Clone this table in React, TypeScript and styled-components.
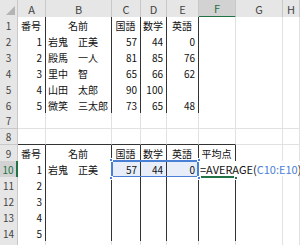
import React from "react"
import styled, { createGlobalStyle, css } from "styled-components"

const GlobalStyle = createGlobalStyle`
  *, *::before, *::after { box-sizing: border-box; }
  html, body { margin: 0; padding: 0; background: #fff; }
  body {
    width: 300px;
    height: 245px;
    overflow: hidden;
    font-family: "Noto Sans CJK JP", "Noto Sans", sans-serif;
  }
`

const COLS = "18px 28px 66px 29px 26px 32px 37px 47px 1fr"
const LETTERS = ["A", "B", "C", "D", "E", "F", "G", "H"]
const GREEN = "#217346"
const BLUE = "#4a7fd6"

const Sheet = styled.div`
  width: 300px;
  height: 245px;
  overflow: hidden;
  background: #fff;
`

const Row = styled.div<{ $head?: boolean }>`
  display: grid;
  grid-template-columns: ${COLS};
  height: ${(p) => (p.$head ? 17 : 16)}px;
`

const Corner = styled.div`
  background: #e6e6e6;
  border-right: 1px solid #c8c8c8;
  border-bottom: 1px solid #c8c8c8;
  display: flex;
  align-items: flex-end;
  justify-content: flex-end;
  padding: 0 2px 2px 0;
`

const ColHead = styled.div<{ $active?: boolean }>`
  display: flex;
  align-items: center;
  justify-content: center;
  font-size: 11px;
  background: ${(p) => (p.$active ? "#d2d2d2" : "#e6e6e6")};
  color: ${(p) => (p.$active ? GREEN : "#444")};
  border-right: 1px solid #c8c8c8;
  border-bottom: ${(p) => (p.$active ? `2px solid ${GREEN}` : "1px solid #c8c8c8")};
`

const RowHead = styled.div<{ $active?: boolean }>`
  display: flex;
  align-items: center;
  justify-content: center;
  font-size: 10px;
  background: ${(p) => (p.$active ? "#d2d2d2" : "#e6e6e6")};
  color: ${(p) => (p.$active ? GREEN : "#444")};
  border-right: ${(p) => (p.$active ? `2px solid ${GREEN}` : "1px solid #c8c8c8")};
  border-bottom: 1px solid #c8c8c8;
`

type Align = "l" | "c" | "r"

const Cell = styled.div<{
  $align: Align
  $rDark: boolean
  $bDark: boolean
  $sel?: "first" | "mid" | "last"
  $edit?: boolean
}>`
  position: relative;
  display: flex;
  align-items: center;
  justify-content: ${(p) =>
    p.$align === "r" ? "flex-end" : p.$align === "c" ? "center" : "flex-start"};
  padding: 1px 3px 0 2px;
  font-size: 10px;
  color: #111;
  white-space: nowrap;
  background: ${(p) => (p.$sel ? "#e7eef9" : "#fff")};
  border-right: 1px solid ${(p) => (p.$rDark ? "#333" : "#e1e1e1")};
  border-bottom: 1px solid ${(p) => (p.$bDark ? "#333" : "#e1e1e1")};
  ${(p) =>
    p.$sel &&
    css`
      &::after {
        content: "";
        position: absolute;
        top: -1px;
        bottom: -1px;
        left: ${p.$sel === "first" ? "-1px" : "0"};
        right: -1px;
        border-top: 2px solid ${BLUE};
        border-bottom: 2px solid ${BLUE};
        border-left: ${p.$sel === "first" ? `2px solid ${BLUE}` : "none"};
        border-right: ${p.$sel === "last" ? `2px solid ${BLUE}` : "none"};
        pointer-events: none;
      }
    `}
  ${(p) =>
    p.$edit &&
    css`
      z-index: 2;
      &::after {
        content: "";
        position: absolute;
        left: 0;
        right: -1px;
        bottom: -1px;
        height: 2px;
        background: ${GREEN};
      }
    `}
`

const Handle = styled.span<{ $pos: "tl" | "bl" | "tr" | "br"; $color: string }>`
  position: absolute;
  width: 4px;
  height: 4px;
  background: ${(p) => p.$color};
  border: 1px solid #fff;
  z-index: 3;
  ${(p) => (p.$pos[0] === "t" ? "top: -3px;" : "bottom: -3px;")}
  ${(p) => (p.$pos[1] === "l" ? "left: -3px;" : "right: -3px;")}
`

const EditBox = styled.span`
  position: absolute;
  left: 0;
  top: 0;
  bottom: 1px;
  display: flex;
  align-items: center;
  padding: 1px 3px 0 1px;
  background: #fff;
  font-family: "Noto Sans CJK JP", "Noto Sans", sans-serif;
  font-size: 11px;
  color: #111;
`

const Ref = styled.span`
  color: ${BLUE};
`

type CellData = { v: string; a: Align }

const n = (v: string | number): CellData => ({ v: String(v), a: "r" })
const t = (v: string): CellData => ({ v, a: "l" })
const h = (v: string): CellData => ({ v, a: "c" })

const HEAD = [h("番号"), h("名前"), h("国語"), h("数学"), h("英語")]

const DATA: Record<number, CellData[]> = {
  1: HEAD,
  2: [n(1), t("岩鬼　正美"), n(57), n(44), n(0)],
  3: [n(2), t("殿馬　一人"), n(81), n(85), n(76)],
  4: [n(3), t("里中　智"), n(65), n(66), n(62)],
  5: [n(4), t("山田　太郎"), n(90), n(100)],
  6: [n(5), t("微笑　三太郎"), n(73), n(65), n(48)],
  9: [...HEAD, h("平均点")],
  10: [n(1), t("岩鬼　正美"), n(57), n(44), n(0)],
  11: [n(2)],
  12: [n(3)],
  13: [n(4)],
  14: [n(5)],
}

const inTable = (r: number, c: number) =>
  (r >= 1 && r <= 6 && c >= 0 && c <= 4) || (r >= 9 && r <= 14 && c >= 0 && c <= 5)

// row 15 only peeks in at the bottom edge
const ROWS = Array.from({ length: 15 }, (_, i) => i + 1)

const App: React.FC = () => {
  return (
    <>
      <GlobalStyle />
      <Sheet>
        <Row $head>
          <Corner>
            <svg width="9" height="9" viewBox="0 0 9 9">
              <polygon points="9,0 9,9 0,9" fill="#b4b4b4" />
            </svg>
          </Corner>
          {LETTERS.map((l) => (
            <ColHead key={l} $active={l === "F"}>
              {l}
            </ColHead>
          ))}
        </Row>
        {ROWS.map((r) => (
          <Row key={r}>
            <RowHead $active={r === 10}>{r < 15 ? r : ""}</RowHead>
            {LETTERS.map((_, c) => {
              const d = DATA[r]?.[c]
              const rDark = inTable(r, c) || inTable(r, c + 1)
              const bDark = inTable(r, c) || inTable(r + 1, c)
              const sel =
                r === 10 && c >= 2 && c <= 4
                  ? c === 2
                    ? "first"
                    : c === 4
                    ? "last"
                    : "mid"
                  : undefined
              const edit = r === 10 && c === 5
              return (
                <Cell
                  key={c}
                  $align={d?.a ?? "l"}
                  $rDark={rDark}
                  $bDark={bDark}
                  $sel={sel}
                  $edit={edit}
                >
                  {d?.v}
                  {sel === "first" && (
                    <>
                      <Handle $pos="tl" $color={BLUE} />
                      <Handle $pos="bl" $color={BLUE} />
                    </>
                  )}
                  {sel === "last" && (
                    <>
                      <Handle $pos="tr" $color={BLUE} />
                      <Handle $pos="br" $color={BLUE} />
                    </>
                  )}
                  {edit && (
                    <>
                      <EditBox>
                        =AVERAGE(<Ref>C10:E10</Ref>)
                      </EditBox>
                      <Handle $pos="br" $color={GREEN} />
                    </>
                  )}
                </Cell>
              )
            })}
          </Row>
        ))}
      </Sheet>
    </>
  )
}

export default App
